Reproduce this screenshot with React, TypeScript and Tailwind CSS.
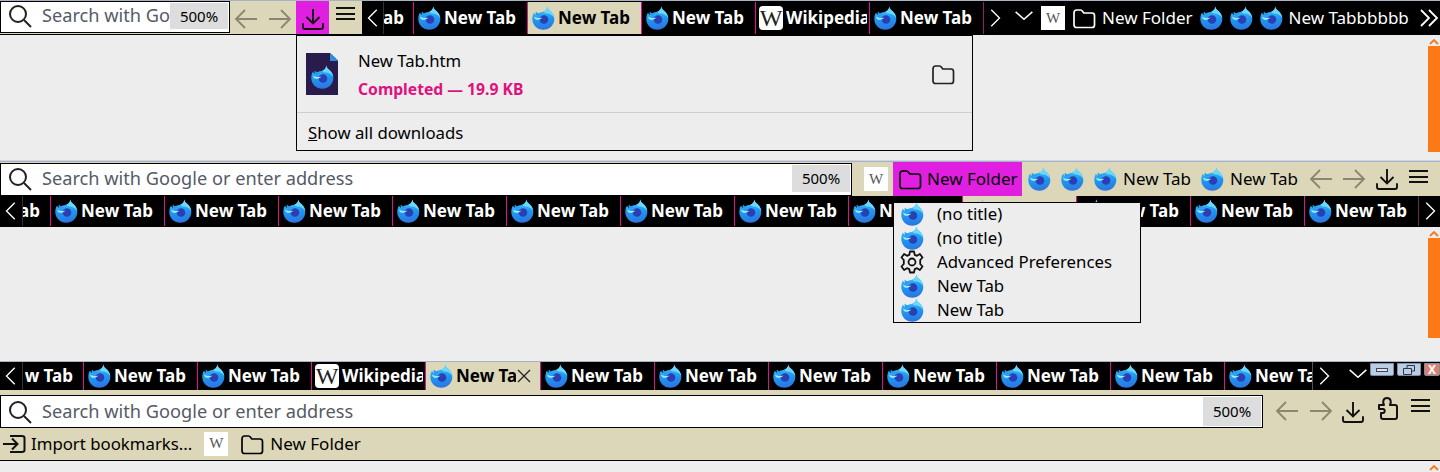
import React from "react";

const FxIcon = ({ className = "" }: { className?: string }) => (
  <svg viewBox="0 0 24 24" className={`w-6 h-6 shrink-0 ${className}`}>
    <defs>
      <linearGradient id="fxBody" x1="0.4" y1="0" x2="0.55" y2="1">
        <stop offset="0" stopColor="#3cc3fa" />
        <stop offset="0.6" stopColor="#1e93ee" />
        <stop offset="1" stopColor="#2f72e2" />
      </linearGradient>
    </defs>
    <path
      d="M16.5 0.5C16.5 3 18.5 4 20 5.5C22.2 7.6 23.3 10.300 23.300 13C23.300 19 18.300 23.800 12.300 23.800C6.300 23.800 1.300 19 1.300 13C1.300 10.500 1.900 8.500 3 6.500C3.500 7.800 4.300 8.600 5.300 9C7 6.500 9.500 6.200 11.500 6C13.800 5.500 16 3.500 16.500 0.500Z"
      fill="url(#fxBody)"
    />
    <path d="M16.500 0.500C16.500 3 18.500 4 20 5.500C21.800 7.200 23 9.500 23.300 12C21.500 9 18.500 7.500 15.500 7.500C14 7.500 13 6.800 12.500 5.800C14.500 5 16 3.200 16.500 0.500Z" fill="#6bd8f9" />
    <circle cx="13" cy="13.500" r="4.300" fill="#2b3fb5" />
    <path d="M3 10.500C5 12 8 12.500 11.500 11.500C10 13.300 7.500 14 5.500 13.800C4 13.500 3.300 12 3 10.500Z" fill="#a8e6fb" />
    <path d="M5 5.500C6.500 7.500 8.500 8.200 10 8C8.500 9.500 6.500 9.800 5 9C4.500 7.800 4.600 6.500 5 5.500Z" fill="#2a9bee" />
  </svg>
);

const WikiBox = () => (
  <div className="w-6 h-6 shrink-0 bg-white flex items-center justify-center font-['Liberation_Serif',serif] text-[15px] text-[#555]">
    W
  </div>
);

const WikiTabIcon = () => (
  <div className="w-6 h-6 shrink-0 bg-white rounded-[4px] flex items-center justify-center font-['Liberation_Serif',serif] text-[24px] leading-none text-[#222]">
    W
  </div>
);

const FolderIcon = ({ className = "" }: { className?: string }) => (
  <svg viewBox="0 0 24 24" fill="none" stroke="currentColor" strokeWidth="1.700" className={`w-6 h-6 shrink-0 ${className}`}>
    <path d="M2 7C2 5 3 4 4.500 4H8.500C9.500 4 10 4.500 10.500 5.300L11.800 7H20C21.500 7 22.500 8 22.500 9.500V19C22.500 20.500 21.500 21.500 20 21.500H4.500C3 21.500 2 20.500 2 19Z" strokeLinejoin="round" />
  </svg>
);

const ArrowIcon = ({ right = false }: { right?: boolean }) => (
  <svg viewBox="0 0 24 24" fill="none" stroke="#8b8672" strokeWidth="1.800" className={`w-6 h-6 shrink-0 ${right ? "rotate-180" : ""}`}>
    <path d="M23 12H2M11 3L2 12L11 21" />
  </svg>
);

const DownloadIcon = () => (
  <svg viewBox="0 0 24 24" fill="none" stroke="#111" strokeWidth="1.900" className="w-6 h-6 shrink-0">
    <path d="M12 2V16M5.500 10L12 16.500L18.500 10" />
    <path d="M2 17V20C2 21.500 3 22 4 22H20C21 22 22 21.500 22 20V17" strokeLinecap="round" />
  </svg>
);

const MenuIcon = ({ className = "" }: { className?: string }) => (
  <div className={`w-[19px] shrink-0 flex flex-col gap-[3.500px] ${className}`}>
    <div className="h-[2px] bg-[#111]" />
    <div className="h-[2px] bg-[#111]" />
    <div className="h-[2px] bg-[#111]" />
  </div>
);

const PuzzleIcon = () => (
  <svg viewBox="0 0 24 24" fill="none" stroke="#111" strokeWidth="2" className="w-6 h-6 shrink-0">
    <path d="M3 9H8C6.500 6 7 2 11 2C15 2 15.500 6 14 9H19C20 9 21 10 21 11V21C21 22 20 23 19 23H7C6 23 5 22 5 21V17H7C9 17 9.500 13 7 13H3Z" strokeLinejoin="round" />
  </svg>
);

const ChevronIcon = ({ dir, className = "" }: { dir: "left" | "right" | "down"; className?: string }) => {
  const d = dir === "left" ? "M17 1L6 12L17 23" : dir === "right" ? "M7 1L18 12L7 23" : "M2 7L12 16L22 7";
  return (
    <svg viewBox="0 0 24 24" fill="none" stroke="#fff" strokeWidth="1.800" className={`shrink-0 ${className}`}>
      <path d={d} />
    </svg>
  );
};

const SearchIcon = () => (
  <svg viewBox="0 0 24 24" fill="none" stroke="#222" strokeWidth="2" className="w-6 h-6 shrink-0">
    <circle cx="10" cy="10" r="8" />
    <path d="M16 16L23 23" />
  </svg>
);

const UrlBar = ({ text, className }: { text: string; className: string }) => (
  <div className={`flex items-stretch bg-white border border-black p-[1px] shrink-0 ${className}`}>
    <div className="pl-[6px] flex items-center min-w-0 flex-1 overflow-hidden">
      <SearchIcon />
      <span className="ml-[10px] whitespace-nowrap text-[18.200px] text-[#555a66]">{text}</span>
    </div>
    <div className="w-[58px] shrink-0 bg-[#dddddd] flex items-center justify-center text-[15px] text-black">
      500%
    </div>
  </div>
);

type TabProps = { title?: string; active?: boolean; wiki?: boolean; close?: boolean; w?: string; end?: string; line?: string };

const Tab = ({ title = "New Tab", active, wiki, close, w = "w-[114px]", end, line = "border-[#e0118f]" }: TabProps) => (
  <div
    className={`${w} shrink-0 h-full border-l ${line} flex items-center overflow-hidden ${
      active ? "bg-[#dcd7b8] text-black" : "text-white"
    } ${end ? `justify-end ${end}` : "pl-[3px]"}`}
  >
    {!end && (wiki ? <WikiTabIcon /> : <FxIcon />)}
    <span
      className={`font-bold text-[17px] whitespace-nowrap overflow-hidden ${end ? "shrink-0" : close ? "ml-[3px] w-[60px]" : "ml-[3px] w-[81px]"}`}
    >
      {title}
    </span>
    {close && (
      <svg viewBox="0 0 14 14" fill="none" stroke="#222" strokeWidth="1.300" className="ml-px w-[14px] h-[14px] shrink-0">
        <path d="M1 1L13 13M13 1L1 13" />
      </svg>
    )}
  </div>
);

const ScrollArrow = () => (
  <svg viewBox="0 0 10 7" fill="none" stroke="#f47a1a" strokeWidth="1.800" className="w-[10px] h-[7px] mx-auto">
    <path d="M1 6L5 2L9 6" />
  </svg>
);

const Scrollbar = ({ thumb }: { thumb: string }) => (
  <div className="absolute right-0 top-0 w-[12px] flex flex-col items-center">
    <div className="h-[11px] pt-[3px] w-full">
      <ScrollArrow />
    </div>
    {thumb && <div className={`w-full bg-[#fb7a17] ${thumb}`} />}
  </div>
);

const DownloadPanel = () => (
  <div className="absolute left-[296px] top-0 w-[677px] h-[116px] border border-black bg-[#ededed]">
    <div className="h-[77px] flex items-center border-b border-[#cfcfcf]">
      <div className="relative ml-[9px] w-[32px] h-[42px] bg-[#2a1b4d] shrink-0 flex items-end justify-center pb-[6px] [clip-path:polygon(0_0,75%_0,100%_18%,100%_100%,0_100%)]">
        <div className="absolute right-0 top-0 w-[8px] h-[8px] bg-[#2a8fe0]" />
        <FxIcon />
      </div>
      <div className="ml-[20px] flex-1 pt-[3px]">
        <div className="text-[16.700px] leading-[22px] -mt-[2px] text-black">New Tab.htm</div>
        <div className="mt-[7px] text-[15.700px] leading-[20px] font-bold text-[#e0117f]">Completed — 19.9 KB</div>
      </div>
      <FolderIcon className="mr-[17px] text-[#222]" />
    </div>
    <div className="pl-[11px] h-[37px] flex items-center pt-[3px] text-[16.800px] text-black">
      <span><span className="underline">S</span>how all downloads</span>
    </div>
  </div>
);

const FolderMenu = () => {
  const items = [
    { t: "(no title)" },
    { t: "(no title)" },
    { t: "Advanced Preferences", gear: true },
    { t: "New Tab" },
    { t: "New Tab" },
  ];
  return (
    <div className="absolute left-[893px] top-[-25px] w-[248px] h-[121px] border border-black bg-[#ededed] z-10">
      <div className="-mt-px">
        {items.map((it, i) => (
          <div key={i} className="h-6 flex items-center pl-[6px] text-[16.800px] text-black">
            {it.gear ? (
              <svg viewBox="0 0 24 24" fill="none" stroke="#111" strokeWidth="1.800" className="w-6 h-6 shrink-0">
                <circle cx="12" cy="12" r="3.500" />
                <path d="M10 1.500H14L14.700 4.800L17 5.800L19.900 4L22.500 7.500L20.200 10L20.200 14L22.500 16.500L19.900 20L17 18.200L14.700 19.200L14 22.500H10L9.300 19.200L7 18.200L4.100 20L1.500 16.500L3.800 14V10L1.500 7.500L4.100 4L7 5.800L9.300 4.800Z" strokeLinejoin="round" />
              </svg>
            ) : (
              <FxIcon />
            )}
            <span className="ml-[13px] whitespace-nowrap">{it.t}</span>
          </div>
        ))}
      </div>
    </div>
  );
};

const WinButton = ({ className, children }: { className: string; children: React.ReactNode }) => (
  <div className={`h-[13px] shrink-0 border border-[#7f8ea3] rounded-b-[2px] flex items-center justify-center ${className}`}>
    {children}
  </div>
);

export default function App() {
  return (
    <div className="w-[1440px] h-[472px] overflow-hidden bg-[#ededed] font-['Noto_Sans',sans-serif]">
      {/* first window */}
      <div className="h-px bg-[#a9b2c2]" />
      <div className="h-[33px] flex items-stretch bg-[#dcd7b8]">
        <UrlBar text="Search with Google or enter address" className="w-[230px] h-[32px] pb-[3px]" />
        <div className="w-[66px] shrink-0 flex items-center pl-[4px] pt-[3px] gap-[10px]">
          <ArrowIcon />
          <ArrowIcon right />
        </div>
        <div className="w-[33px] shrink-0 bg-[#e01fe0] flex items-center justify-center pt-[3px]">
          <DownloadIcon />
        </div>
        <div className="w-[33px] shrink-0 pt-[6px] flex justify-center">
          <MenuIcon />
        </div>
        <div className="flex-1 min-w-0 bg-black flex items-center pt-px text-white">
          <div className="w-[21px] shrink-0 flex justify-center">
            <ChevronIcon dir="left" className="w-[18px] h-6" />
          </div>
          <Tab title="ab" w="w-[30px]" end="pr-[9px]" line="border-[#333]" />
          <Tab />
          <Tab active />
          <Tab />
          <Tab title="Wikipedia" wiki />
          <Tab />
          <div className="w-[23px] h-full shrink-0 border-l border-[#90206a] flex justify-center items-center">
            <ChevronIcon dir="right" className="w-[18px] h-6" />
          </div>
          <div className="w-[35px] shrink-0 flex justify-center pb-[5px]">
            <ChevronIcon dir="down" className="w-5 h-5" />
          </div>
          <WikiBox />
          <FolderIcon className="ml-[7px]" />
          <span className="ml-[6px] text-[17px] whitespace-nowrap">New Folder</span>
          <FxIcon className="ml-[6px]" />
          <FxIcon className="ml-[6px]" />
          <FxIcon className="ml-[6px]" />
          <span className="ml-[6px] text-[17px] whitespace-nowrap">New Tabbbbbb</span>
          <svg viewBox="0 0 20 20" fill="none" stroke="#fff" strokeWidth="1.800" className="ml-[10px] w-5 h-5 shrink-0">
            <path d="M2 2L10 10L2 18M10 2L18 10L10 18" />
          </svg>
        </div>
      </div>
      <div className="h-px bg-black" />
      <div className="relative h-[125px]">
        <DownloadPanel />
        <Scrollbar thumb="h-[106px]" />
      </div>
      <div className="h-px bg-[#cdd6e6]" />

      {/* second window */}
      <div className="h-px bg-[#a9b2c2]" />
      <div className="h-[34px] flex items-stretch bg-[#dcd7b8]">
        <UrlBar text="Search with Google or enter address" className="w-[852px] h-[33px] mt-px pb-[3px]" />
        <div className="ml-[12px] self-center">
          <WikiBox />
        </div>
        <div className="ml-[5px] w-[129px] shrink-0 bg-[#e01fe0] flex items-center pl-[5px] text-black">
          <FolderIcon />
          <span className="ml-[5px] text-[17px] whitespace-nowrap">New Folder</span>
        </div>
        <div className="flex items-center text-black flex-1">
          <FxIcon className="ml-[5px]" />
          <FxIcon className="ml-[9px]" />
          <FxIcon className="ml-[9px]" />
          <span className="ml-[6px] w-[68px] text-[17px] whitespace-nowrap">New Tab</span>
          <FxIcon className="ml-[9px]" />
          <span className="ml-[6px] w-[68px] text-[17px] whitespace-nowrap">New Tab</span>
          <div className="ml-[11px] flex gap-[9px]">
            <ArrowIcon />
            <ArrowIcon right />
          </div>
          <div className="ml-[9px]">
            <DownloadIcon />
          </div>
          <MenuIcon className="ml-[10px] mb-[5px]" />
        </div>
      </div>
      <div className="h-[31px] bg-black flex items-center pb-px">
        <div className="w-[22px] shrink-0 flex justify-center">
          <ChevronIcon dir="left" className="w-[18px] h-6" />
        </div>
        <Tab title="ab" w="w-[28px]" end="pr-[10px]" line="border-[#333]" />
        {[0, 1, 2, 3, 4, 5, 6, 7].map((i) => (
          <Tab key={i} />
        ))}
        <Tab active />
        {[0, 1, 2].map((i) => (
          <Tab key={i} />
        ))}
        <div className="flex-1 h-full border-l border-[#603050] flex justify-center items-center">
          <ChevronIcon dir="right" className="w-[18px] h-6" />
        </div>
      </div>
      <div className="relative h-[134px]">
        <FolderMenu />
        <Scrollbar thumb="h-[100px]" />
      </div>

      {/* third window */}
      <div className="h-px bg-[#a9b2c2]" />
      <div className="h-[28px] bg-black flex items-stretch">
        <div className="w-[22px] shrink-0 flex justify-center items-center">
          <ChevronIcon dir="left" className="w-[18px] h-6" />
        </div>
        <Tab title="w Tab" w="w-[61px]" end="pr-[10px]" line="border-[#333]" />
        <Tab />
        <Tab />
        <Tab title="Wikipedia" wiki />
        <Tab active close w="w-[115px]" />
        {[0, 1, 2, 3, 4, 5].map((i) => (
          <Tab key={i} />
        ))}
        <Tab title="New Tab" w="w-[88px]" />
        <div className="w-[34px] shrink-0 border-l border-[#555] flex justify-center items-center pr-[12px]">
          <ChevronIcon dir="right" className="w-[18px] h-6" />
        </div>
        <div className="w-[24px] shrink-0 flex justify-center items-center pb-[4px]">
          <ChevronIcon dir="down" className="w-5 h-5" />
        </div>
        <div className="flex-1 flex gap-[3px] items-start pt-px">
          <WinButton className="w-[24px] bg-[#b9cde4]">
            <div className="w-[12px] h-[4px] border border-[#445] bg-[#dde6f0]" />
          </WinButton>
          <WinButton className="w-[24px] bg-[#b9cde4]">
            <svg viewBox="0 0 12 10" fill="none" stroke="#334" strokeWidth="1" className="w-[12px] h-[10px]">
              <path d="M4 3V0.500H11.500V6H8.500" />
              <path d="M0.500 3.500H8.500V9.500H0.500Z" />
            </svg>
          </WinButton>
          <WinButton className="flex-1 bg-[#d98272] text-white text-[12px] font-bold leading-none">
            <span>X</span>
          </WinButton>
        </div>
      </div>
      <div className="h-[70px] bg-[#dcd7b8]">
        <div className="h-[37px] flex items-start pt-[5px]">
          <UrlBar text="Search with Google or enter address" className="w-[1263px] h-[33px]" />
          <div className="ml-[12px] mt-[4px] flex items-center gap-[10px]">
            <ArrowIcon />
            <ArrowIcon right />
          </div>
          <div className="ml-[8px] mt-[5px]">
            <DownloadIcon />
          </div>
          <div className="ml-[11px] mt-[1px]">
            <PuzzleIcon />
          </div>
          <MenuIcon className="ml-[11px] mt-[4px]" />
        </div>
        <div className="h-[32px] pt-px flex items-center text-black">
          <svg viewBox="0 0 24 24" fill="none" stroke="#111" strokeWidth="2" className="ml-[2px] w-6 h-6 shrink-0">
            <path d="M1 12H15M10 6.500L15.500 12L10 17.500" />
            <path d="M8 4H20C21.500 4 22.500 5 22.500 6V18C22.500 19 21.500 20 20 20H8" />
          </svg>
          <span className="ml-[5px] text-[16.800px] whitespace-nowrap">Import bookmarks...</span>
          <div className="ml-[12px]">
            <WikiBox />
          </div>
          <FolderIcon className="ml-[12px]" />
          <span className="ml-[6px] text-[17px] whitespace-nowrap">New Folder</span>
        </div>
      </div>
      <div className="h-px bg-black" />
      <div className="relative h-[12px]">
        <Scrollbar thumb="" />
      </div>
    </div>
  );
}
